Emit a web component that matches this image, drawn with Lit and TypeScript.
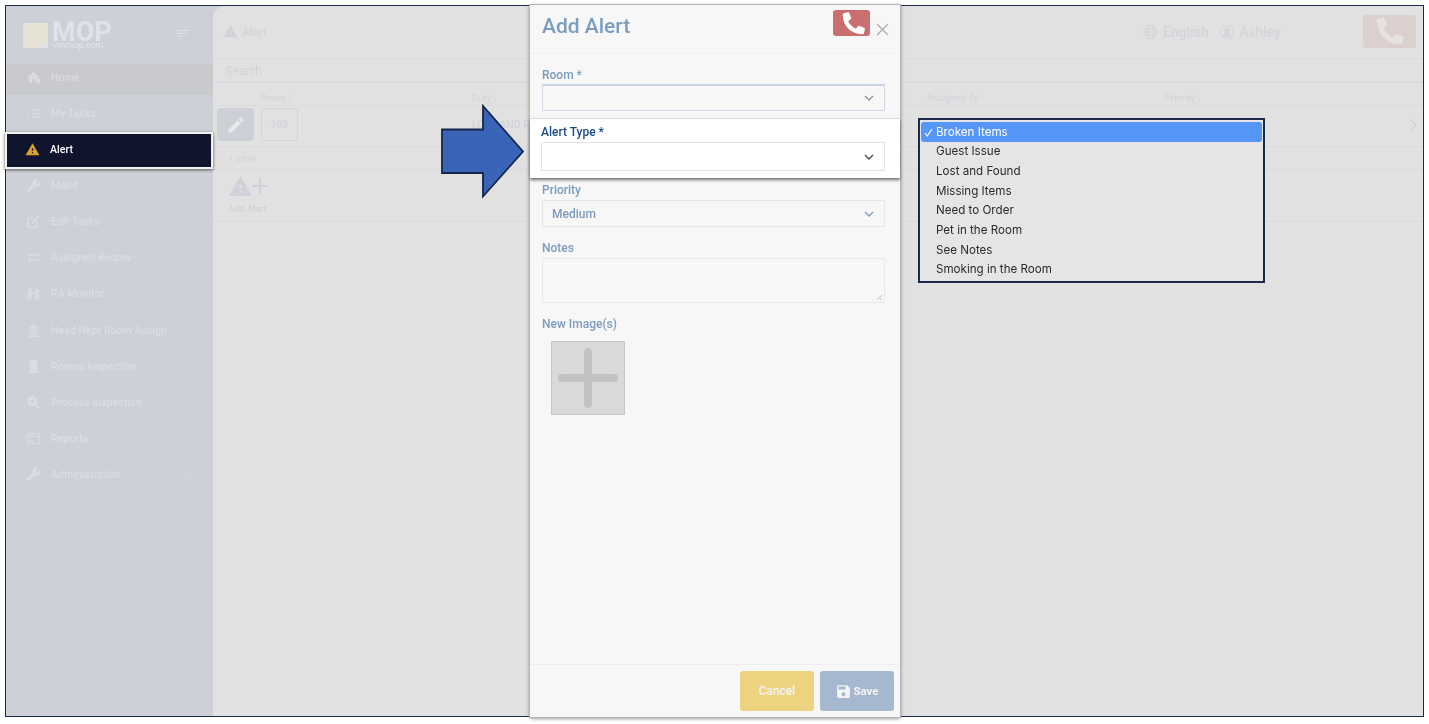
import { LitElement, html, css, svg } from "lit";
import { customElement } from "lit/decorators.js";

const P = {
  home: svg`<path d="M10 20v-6h4v6h1.200a5 5 0 0 1 3.800-6.600V12h3L12 3 2 12h3v8z"/><circle cx="19.500" cy="17.500" r="4"/>`,
  tasks: svg`<path d="M10 5.200h12v2H10zM10 11h12v2H10zM10 16.800h12v2H10z"/><path d="M2 5.500l1.500 1.500L6.500 4M2 11l1.500 1.500L6.500 9.500M2 17l1.500 1.500L6.500 15.500" fill="none" stroke="currentColor" stroke-width="1.300"/>`,
  warn: svg`<path d="M1 21h22L12 2 1 21zm12-3h-2v-2h2v2zm0-4h-2v-4h2v4z"/>`,
  wrench: svg`<g transform="matrix(-1 0 0 1 24 0)"><path d="M22.700 19l-9.100-9.100c.9-2.300.4-5-1.500-6.900-2-2-5-2.400-7.400-1.300L9 6 6 9 1.600 4.700C.4 7.100.9 10.100 2.900 12.100c1.900 1.900 4.600 2.400 6.900 1.500l9.100 9.100c.4.4 1 .4 1.400 0l2.300-2.300c.5-.4.5-1.100.1-1.400z"/></g>`,
  edit: svg`<path d="M18 13v6a2 2 0 0 1-2 2H5a2 2 0 0 1-2-2V8a2 2 0 0 1 2-2h6" fill="none" stroke="currentColor" stroke-width="2.400"/><path d="M19.500 2.500l2 2L12 14.500l-3 1 1-3z"/>`,
  swap: svg`<path d="M3 7h14V3.500L22 8l-5 4.500V9H3zM21 15H7v-3.500L2 16l5 4.500V17h14z"/>`,
  binoc: svg`<path d="M2 21l1.500-11L5 4h4v17zM22 21l-1.500-11L19 4h-4v17zM10.500 9h3v5h-3zM5.500 1.500h3V3h-3zM15.500 1.500h3V3h-3z"/>`,
  bank: svg`<path d="M12 2l7 5v2H5V7zM6 10h12v2H6zM6.500 13H9v6H6.500zM10.800 13h2.400v6h-2.400zM15 13h2.500v6H15zM4 20h16v2.500H4z"/>`,
  door: svg`<path d="M6 2h12v18h3v2H3v-2h3zm8.500 9a1.200 1.200 0 1 0 0 2.400 1.200 1.200 0 0 0 0-2.400z" fill-rule="evenodd"/>`,
  zoom: svg`<path fill-rule="evenodd" d="M10 2a8 8 0 0 1 6.400 12.800l6 6-2 2-6-6A8 8 0 1 1 10 2zM9 6v3H6v2h3v3h2v-3h3V9h-3V6z"/>`,
  card: svg`<path fill-rule="evenodd" d="M4 3h16a3 3 0 0 1 3 3v12a3 3 0 0 1-3 3H4a3 3 0 0 1-3-3V6a3 3 0 0 1 3-3zm-1 6v9a1 1 0 0 0 1 1h16a1 1 0 0 0 1-1V9zm0-3v1h18V6a1 1 0 0 0-1-1H4a1 1 0 0 0-1 1zm2 9h6v2H5z"/>`,
  pencil: svg`<path d="M3 17.250V21h3.750L17.810 9.940l-3.750-3.750L3 17.250zM20.710 7.040a1 1 0 0 0 0-1.410l-2.340-2.340a1 1 0 0 0-1.410 0l-1.830 1.830 3.750 3.750 1.830-1.830z"/>`,
  phone: svg`<path d="M5.500 2.500l3-.8c.6-.1 1.100.2 1.300.7l1.500 3.500c.2.5.1 1-.3 1.300L9 9c1.200 2.500 3.400 4.700 6 6l1.800-2c.3-.4.9-.5 1.300-.3l3.500 1.500c.5.2.8.8.7 1.300l-.8 3c-.1.500-.6.900-1.100.9C11.300 19.400 4.600 12.700 4.600 3.600c0-.5.400-1 .9-1.100z"/>`,
  save: svg`<path fill-rule="evenodd" d="M17 3H5a2 2 0 0 0-2 2v14a2 2 0 0 0 2 2h14a2 2 0 0 0 2-2V7l-4-4zm-5 16a3 3 0 1 1 0-6 3 3 0 0 1 0 6zm3-10H5V5h10v4z"/>`,
};

const icon = (p: unknown, size = 20) =>
  html`<svg class="ic" width=${size} height=${size} viewBox="0 0 24 24" fill="currentColor">${p}</svg>`;

const chev = html`<svg class="chev" width="10" height="6" viewBox="0 0 10 6"><path d="M1 1l4 4 4-4" fill="none" stroke="currentColor" stroke-width="1.300"/></svg>`;

const nav: [string, unknown][] = [
  ["Home", P.home],
  ["My Tasks", P.tasks],
  ["Alert", P.warn],
  ["Maint", P.wrench],
  ["Edit Tasks", P.edit],
  ["Assigned Rooms", P.swap],
  ["RA Monitor", P.binoc],
  ["Head Hkpr Room Assign", P.bank],
  ["Rooms Inspection", P.door],
  ["Process Inspection", P.zoom],
  ["Reports", P.card],
  ["Administration", P.wrench],
];

const options = ["Broken Items", "Guest Issue", "Lost and Found", "Missing Items", "Need to Order", "Pet in the Room", "See Notes", "Smoking in the Room"];

@customElement("app-root")
export class AppRoot extends LitElement {
  static styles = css`
    :host {
      display: block;
      position: relative;
      width: 1429px;
      height: 724px;
      padding: 5px;
      box-sizing: border-box;
      background: #fff;
      overflow: hidden;
      font-family: Roboto, "Liberation Sans", sans-serif;
    }
    * { box-sizing: border-box; }
    .ic { display: block; flex: none; }
    .frame {
      display: flex;
      width: 1419px;
      height: 712px;
      border: 1px solid #1b2a4a;
      background: #cdd1d7;
    }
    .side { width: 207px; flex: none; color: #dadde1; position: relative; z-index: 1; filter: blur(0.35px); }
    .brand { height: 53px; display: flex; padding: 17px 0 0 17px; position: relative; }
    .sq { width: 25px; height: 25px; background: #e6e2d4; position: relative; flex: none; }
    .sq::after { content: ""; position: absolute; right: 0; bottom: 0; width: 6px; height: 6px; background: #e1e3e7; }
    .mop { margin-left: 4px; width: 62px; flex: none; display: flex; flex-direction: column; color: #dfe2e6; }
    .mop b { font-size: 27px; line-height: 19px; font-weight: 700; }
    .mop span { font-size: 9px; line-height: 9px; margin: -1px 0 0 1px; font-weight: 500; }
    .burger { margin: 7px 0 0 63px; width: 13px; display: flex; flex-direction: column; gap: 2px; }
    .burger i { display: block; height: 1px; background: #dfe1e3; }
    .burger i:nth-child(2) { width: 10px; }
    .burger i:nth-child(3) { width: 5px; }
    .item {
      height: 36.15px;
      display: flex;
      align-items: center;
      padding-left: 20px;
      gap: 9px;
      font-size: 10.600px;
      font-weight: 500;
      position: relative;
    }
    .item .ic { margin-right: 1px; }
    .item.home { background: linear-gradient(transparent 5px, #c9cacd 5px, #c9cacd 36px, transparent 36px); color: #dadbde; }
    .item.on { color: #fff; z-index: 2; padding-left: 19px; gap: 9px; }
    .item.on::before {
      content: "";
      position: absolute;
      left: -1px;
      right: 0;
      top: 1px;
      bottom: -2px;
      background: #10142c;
      border: 2px solid #f2f2f2;
      box-shadow: 0 1px 3px #555;
    }
    .item.on > * { position: relative; }
    .item.on .ic { color: #d9a32b; }
    .item .more { position: absolute; right: 22px; color: #d3d6db; }
    .main { flex: 1; background: #e1e1e1; border-top-left-radius: 12px; color: #cfd3d9; min-width: 0; filter: blur(0.35px); }
    .top {
      height: 53px;
      border-bottom: 1px solid #dadada;
      display: flex;
      align-items: center;
      padding: 0 7px 1px 10px;
      font-size: 11.500px;
      font-weight: 500;
      gap: 4px;
    }
    .top .right { margin-left: auto; display: flex; align-items: center; font-size: 14px; gap: 4px; color: #d2d5db; }
    .top .right .u { margin-left: 6px; }
    .bigphone { margin-left: 78px; width: 53px; height: 33px; padding: 3px 4px 0 0; background: #dcd0cf; border-radius: 3px; display: flex; align-items: center; justify-content: center; color: #e6e2e2; }
    .search { height: 24px; border-bottom: 1.500px solid #cfd6df; padding: 2px 0 0 12px; font-size: 12px; line-height: 20px; color: #d0d3d8; }
    .grid { display: grid; grid-template-columns: 48px 211px 455px 238px 1fr; align-items: center; border-bottom: 1px solid #dadada; font-size: 9.500px; }
    .grid.head { height: 23px; padding-top: 6px; }
    .grid.body { height: 41px; font-size: 10.500px; padding-bottom: 3px; }
    .pen { margin-left: 4px; width: 37px; height: 33px; background: #cdd1d7; border-radius: 4px; display: flex; align-items: center; justify-content: center; color: #e8e9eb; }
    .num { width: 37px; height: 33px; border: 1px solid #d2d5da; border-radius: 4px; display: flex; align-items: center; justify-content: center; font-size: 10px; font-weight: 500; }
    .end { justify-self: end; margin-right: 6px; }
    .total { height: 23px; border-bottom: 1px solid #dadada; padding-left: 15px; font-size: 9.500px; line-height: 23px; }
    .add { height: 52px; border-bottom: 1px solid #dadada; padding: 4px 0 0 15px; display: flex; flex-direction: column; font-size: 9.200px; line-height: 12px; font-weight: 500; gap: 5px; }
    .add .row { display: flex; align-items: center; height: 24px; }
    .add .row svg:last-child { margin-left: -2px; }
    .modal {
      position: absolute;
      left: 530px;
      top: 5px;
      width: 370px;
      height: 712px;
      background: #f7f7f7;
      box-shadow: 0 0 0 1px #b5b5b5, 0 1px 4px #666;
      display: flex;
      flex-direction: column;
      z-index: 3;
      filter: blur(0.25px);
    }
    .mhead { height: 49px; flex: none; border-bottom: 1px solid #f0f0f0; display: flex; padding: 5px 11px 0 12px; }
    .mhead h1 { margin: 0; font-size: 21px; line-height: 32px; font-weight: 500; color: #7a9dbf; flex: 1; }
    .mphone { width: 37px; height: 26px; padding-top: 4px; background: #c96f70; border-radius: 3px; display: flex; align-items: center; justify-content: center; color: #fff; overflow: hidden; }
    .x { margin: 13px 0 0 6px; color: #a9a9a9; display: block; }
    .mbody { flex: 1; padding: 0 15px 0 12px; display: flex; flex-direction: column; align-items: stretch; }
    label, .lab { display: block; font-size: 12px; line-height: 14px; font-weight: 500; color: #7d9bbd; }
    .sel { border: 1px solid #e6e6e6; display: flex; align-items: center; justify-content: flex-end; padding: 0 10px 0 9px; color: #8f8f8f; font-size: 12px; font-weight: 500; }
    .sel.room { height: 27px; margin-top: 2px; border-color: #cfdae6; border-top: 2px solid #c6d3e1; }
    .hl {
      margin: 8px -15px 0 -12px;
      padding: 6px 15px 7px 11px;
      background: #fff;
      box-shadow: 0 2px 3px #707070, 0 0 1px #777;
      position: relative;
    }
    .hl label { color: #1d4a85; }
    .hl .sel { height: 29px; margin-top: 3px; border-color: #e3e3e3; color: #444; }
    .pri { height: 27px; margin-top: 3px; justify-content: space-between; color: #7d9bbd; }
    .notes { height: 45px; margin-top: 3px; border: 1px solid #e8e8e8; position: relative; }
    .notes svg { position: absolute; right: 1px; bottom: 1px; }
    .drop { margin: 10px 0 0 9px; width: 74px; height: 74px; background: #d9d9d9; border: 1px solid #c6c6c6; color: #c2c2c2; }
    .drop svg { display: block; }
    .mfoot { height: 53px; flex: none; border-top: 1px solid #eeeeee; padding: 6px 6px 0 0; display: flex; justify-content: flex-end; gap: 6px; }
    .btn { width: 74px; height: 40px; border-radius: 3px; display: flex; align-items: center; justify-content: center; gap: 1px; color: #f4f4f4; font-size: 12px; font-weight: 500; }
    .cancel { background: #edd27f; }
    .savebtn { background: #a5b8cf; font-weight: 700; font-size: 11.500px; }
    .arrow { position: absolute; left: 440px; top: 104px; z-index: 4; display: block; }
    .menu {
      position: absolute;
      left: 918px;
      top: 118px;
      width: 347px;
      height: 165px;
      background: #e4e5e7;
      border: 2px solid #1b2a4a;
      padding: 2px 1px;
      z-index: 4;
      color: #2b2b2b;
      filter: blur(0.2px);
    }
    .opt { height: 19.650px; padding-left: 15px; display: flex; align-items: center; position: relative; font-family: Inter, Roboto, sans-serif; font-size: 11.600px; }
    .opt.sel1 { background: #5596f7; color: #fff; border-radius: 3px; }
    .opt.sel1 svg { position: absolute; left: 3px; top: 6px; }
  `;

  render() {
    return html`
      <div class="frame">
        <aside class="side">
          <div class="brand">
            <div class="sq"></div>
            <div class="mop"><b>MOP</b><span>vmmop.com</span></div>
            <div class="burger"><i></i><i></i><i></i></div>
          </div>
          ${nav.map(
            ([t, p]) => html`<div class="item ${t === "Home" ? "home" : ""} ${t === "Alert" ? "on" : ""}">
              ${icon(p, 15)}<span>${t}</span>
              ${t === "Administration" ? html`<span class="more">${chev}</span>` : ""}
            </div>`
          )}
        </aside>
        <main class="main">
          <div class="top">
            ${icon(P.warn, 15)}<span>Alert</span>
            <div class="right">
              <svg class="ic" width="16" height="16" viewBox="0 0 24 24" fill="none" stroke="currentColor" stroke-width="1.500"><circle cx="12" cy="12" r="10"/><ellipse cx="12" cy="12" rx="4.500" ry="10"/><path d="M2 12h20M3.500 7h17M3.500 17h17"/></svg>
              <span>English</span>
              <svg class="ic u" width="16" height="16" viewBox="0 0 24 24" fill="none" stroke="currentColor" stroke-width="1.500"><circle cx="12" cy="12" r="10"/><circle cx="12" cy="9.500" r="3.500" fill="currentColor"/><path d="M5.500 19c1-4 3.500-5 6.500-5s5.500 1 6.500 5" fill="currentColor"/></svg>
              <span>Ashley</span>
              <div class="bigphone">${icon(P.phone, 36)}</div>
            </div>
          </div>
          <div class="search">Search</div>
          <div class="grid head">
            <span></span><span>Room ⁝</span><span>Duty ⁝</span><span>Assigned To ⁝</span><span>Priority ⁝</span>
          </div>
          <div class="grid body">
            <div class="pen">${icon(P.pencil, 20)}</div>
            <div class="num">103</div>
            <span>LOST AND FOUND</span>
            <span></span>
            <svg class="end" width="7" height="12" viewBox="0 0 7 12"><path d="M1 1l5 5-5 5" fill="none" stroke="currentColor" stroke-width="1.200"/></svg>
          </div>
          <div class="total">1 total</div>
          <div class="add">
            <div class="row">
              ${icon(P.warn, 25)}
              <svg class="ic" width="18" height="18" viewBox="0 0 18 18" fill="none" stroke="currentColor" stroke-width="2"><path d="M9 1v16M1 9h16"/></svg>
            </div>
            <span>Add Alert</span>
          </div>
        </main>
      </div>

      <section class="modal">
        <header class="mhead">
          <h1>Add Alert</h1>
          <div class="mphone">${icon(P.phone, 30)}</div>
          <svg class="x" width="13" height="13" viewBox="0 0 13 13"><path d="M1 1l11 11M12 1L1 12" stroke="currentColor" stroke-width="1.200" fill="none"/></svg>
        </header>
        <div class="mbody">
          <label style="margin-top:14px">Room *</label>
          <div class="sel room">${chev}</div>
          <div class="hl">
            <label>Alert Type *</label>
            <div class="sel">${chev}</div>
          </div>
          <label style="margin-top:5px">Priority</label>
          <div class="sel pri"><span>Medium</span>${chev}</div>
          <label style="margin-top:14px">Notes</label>
          <div class="notes">
            <svg width="7" height="7" viewBox="0 0 7 7"><path d="M1 6l5-5M4 6l2-2" stroke="#b0b0b0" stroke-width=".8"/></svg>
          </div>
          <div class="lab" style="margin-top:14px">New Image(s)</div>
          <div class="drop">
            <svg width="72" height="72" viewBox="0 0 72 72"><path d="M36 10v52M10 36h52" stroke="currentColor" stroke-width="8" stroke-linecap="round" fill="none"/></svg>
          </div>
        </div>
        <footer class="mfoot">
          <div class="btn cancel">Cancel</div>
          <div class="btn savebtn">${icon(P.save, 17)}<span>Save</span></div>
        </footer>
      </section>

      <svg class="arrow" width="88" height="96" viewBox="0 0 88 96">
        <path d="M2 25.500h41V2l40 45.500-40 45V69H2z" fill="#3a64b8" stroke="#14264a" stroke-width="1.800"/>
      </svg>

      <div class="menu">
        ${options.map(
          (o, i) => html`<div class="opt ${i === 0 ? "sel1" : ""}">
            ${i === 0 ? html`<svg width="9" height="9" viewBox="0 0 9 9"><path d="M1 5l2.300 3L8 1" fill="none" stroke="#fff" stroke-width="1.200"/></svg>` : ""}
            ${o}
          </div>`
        )}
      </div>
    `;
  }
}
